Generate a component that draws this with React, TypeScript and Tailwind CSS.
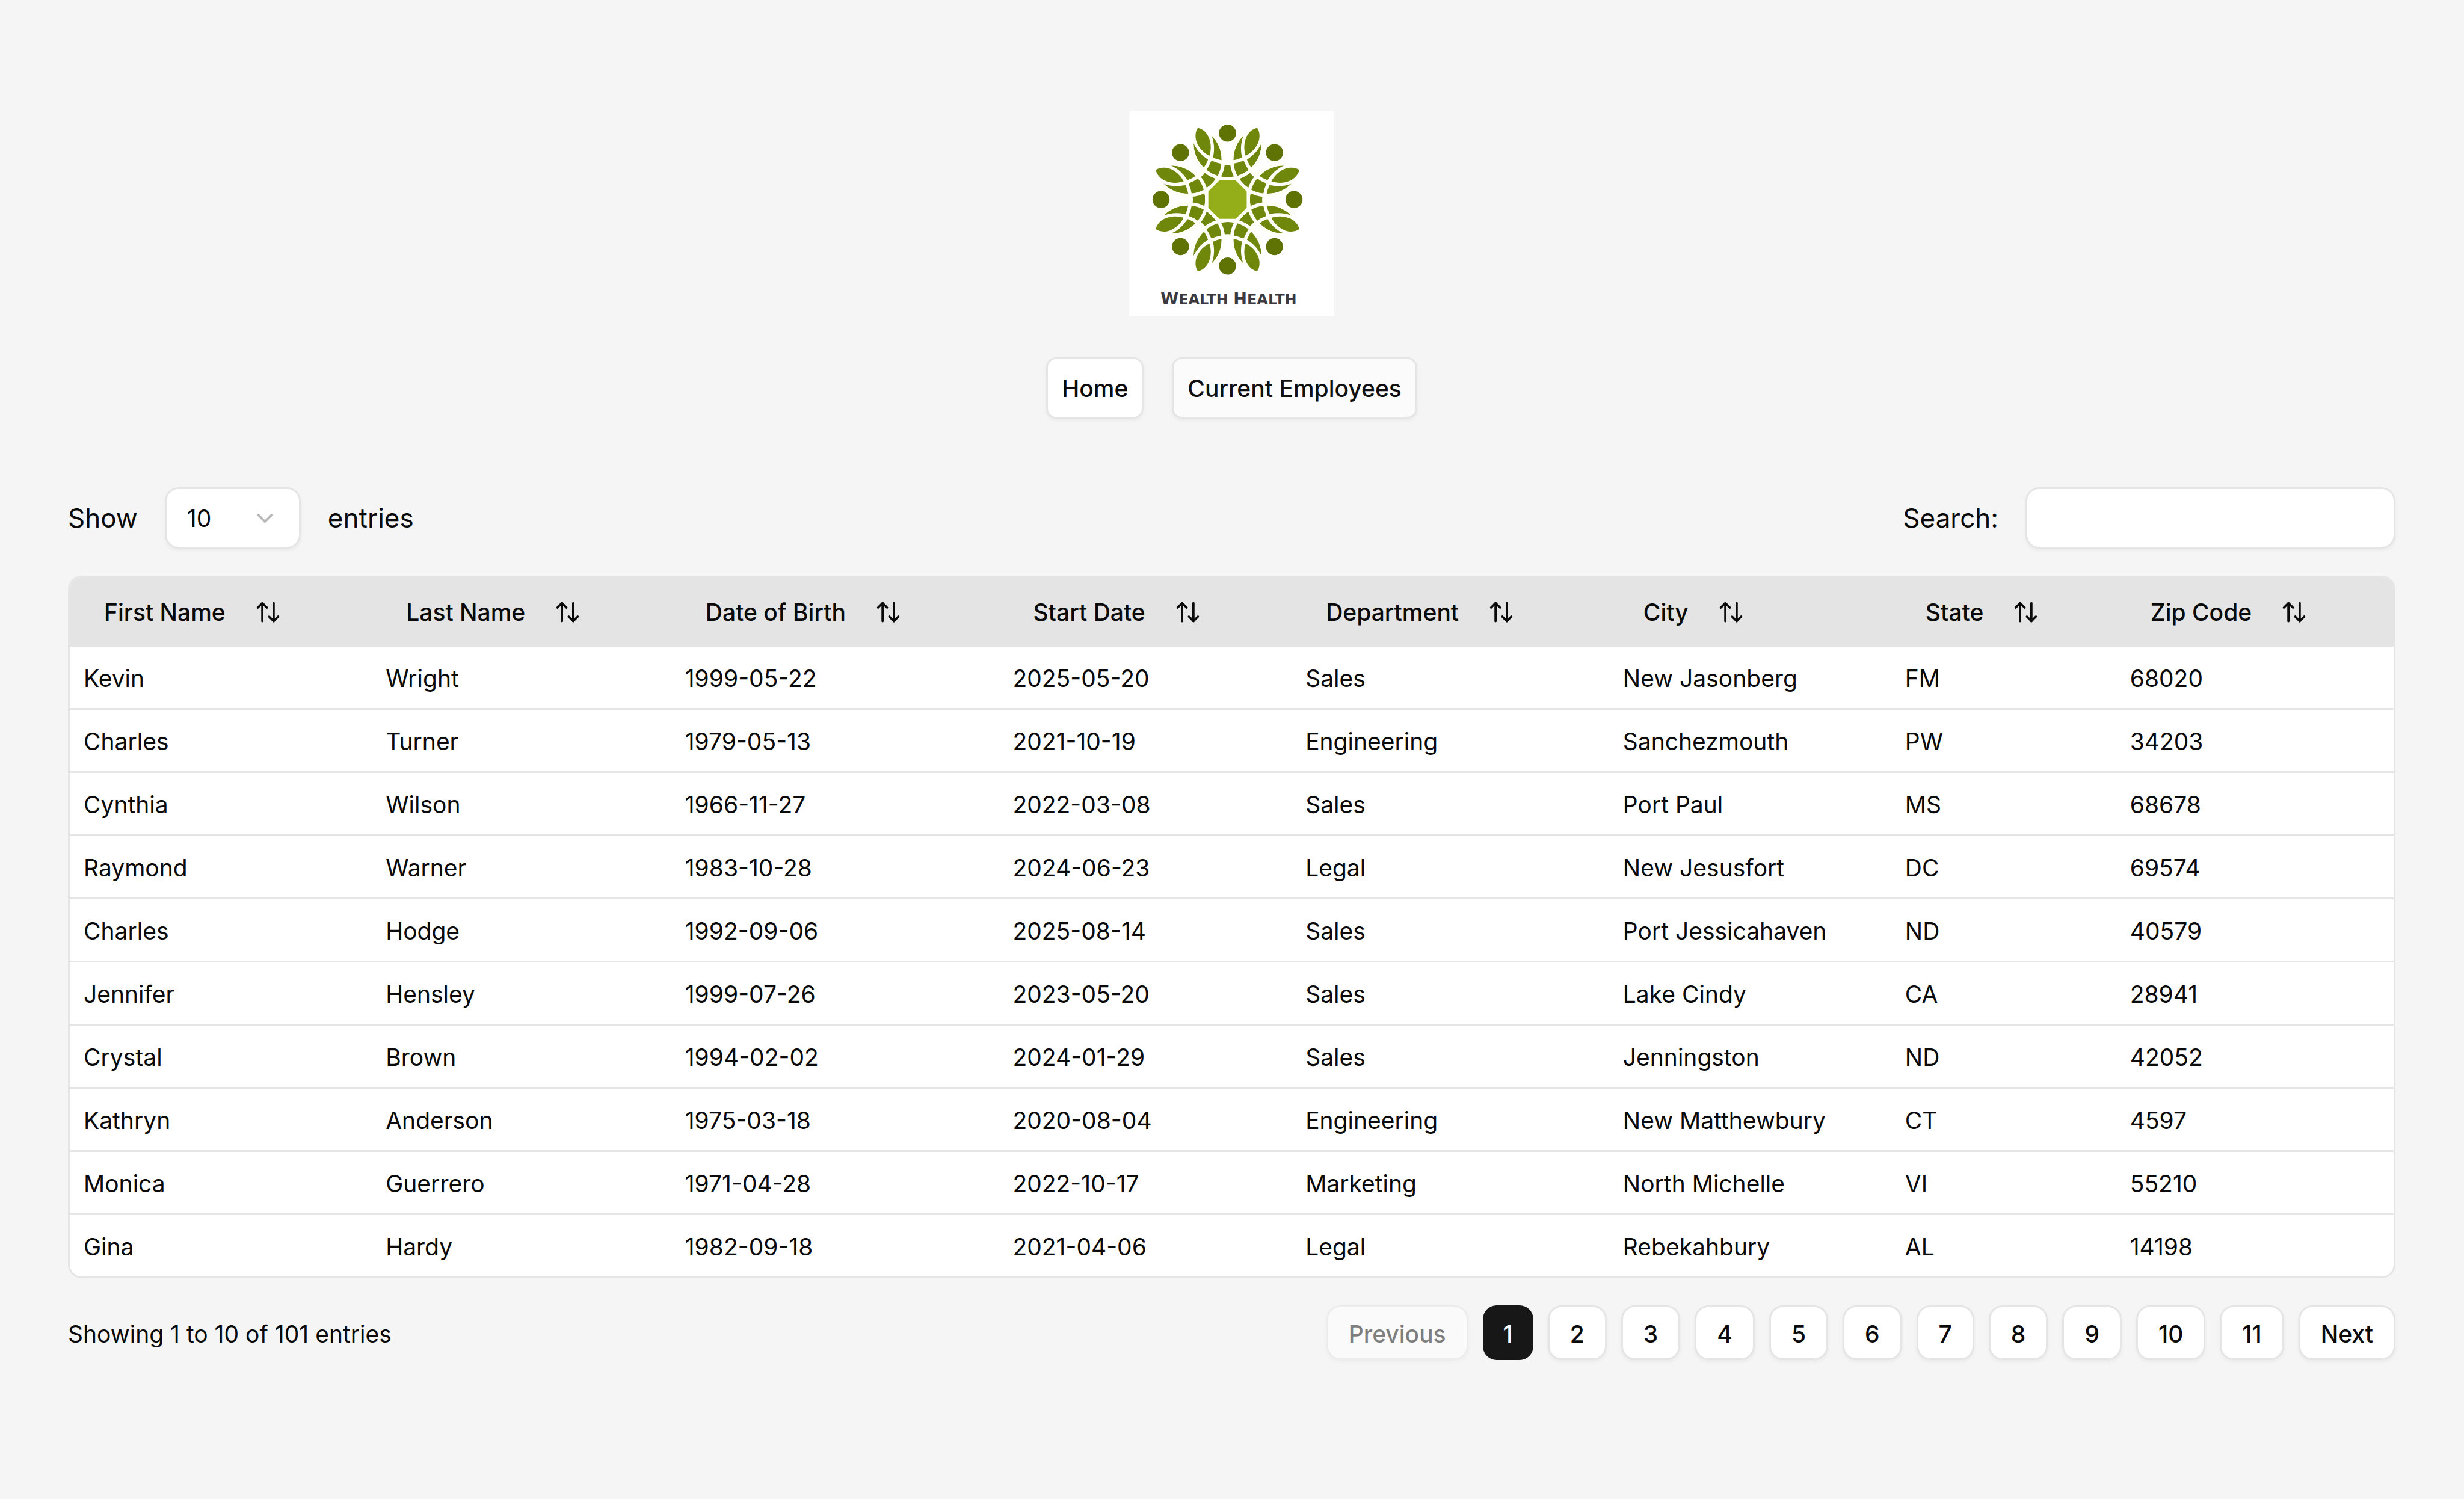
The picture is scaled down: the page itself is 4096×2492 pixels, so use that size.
import { useState } from "react";
import { ArrowUpDown, ChevronDown } from "lucide-react";

type Employee = [string, string, string, string, string, string, string, string];

const columns = [
  { label: "First Name", width: "w-[13%]" },
  { label: "Last Name", width: "w-[12.88%]" },
  { label: "Date of Birth", width: "w-[14.1%]" },
  { label: "Start Date", width: "w-[12.6%]" },
  { label: "Department", width: "w-[13.66%]" },
  { label: "City", width: "w-[12.14%]" },
  { label: "State", width: "w-[9.68%]" },
  { label: "Zip Code", width: "w-[11.94%]" },
];

const employees: Employee[] = [
  ["Kevin", "Wright", "1999-05-22", "2025-05-20", "Sales", "New Jasonberg", "FM", "68020"],
  ["Charles", "Turner", "1979-05-13", "2021-10-19", "Engineering", "Sanchezmouth", "PW", "34203"],
  ["Cynthia", "Wilson", "1966-11-27", "2022-03-08", "Sales", "Port Paul", "MS", "68678"],
  ["Raymond", "Warner", "1983-10-28", "2024-06-23", "Legal", "New Jesusfort", "DC", "69574"],
  ["Charles", "Hodge", "1992-09-06", "2025-08-14", "Sales", "Port Jessicahaven", "ND", "40579"],
  ["Jennifer", "Hensley", "1999-07-26", "2023-05-20", "Sales", "Lake Cindy", "CA", "28941"],
  ["Crystal", "Brown", "1994-02-02", "2024-01-29", "Sales", "Jenningston", "ND", "42052"],
  ["Kathryn", "Anderson", "1975-03-18", "2020-08-04", "Engineering", "New Matthewbury", "CT", "4597"],
  ["Monica", "Guerrero", "1971-04-28", "2022-10-17", "Marketing", "North Michelle", "VI", "55210"],
  ["Gina", "Hardy", "1982-09-18", "2021-04-06", "Legal", "Rebekahbury", "AL", "14198"],
];

const pages = [1, 2, 3, 4, 5, 6, 7, 8, 9, 10, 11];
const turns = [0, 45, 90, 135, 180, 225, 270, 315];

const shadow = "shadow-[0_3px_6px_rgba(0,0,0,0.05)]";

function Logo() {
  return (
    <svg viewBox="0 0 1080 1080" className="size-[341px] bg-white" role="img" aria-label="Wealth Health">
      <g transform="translate(518 465)">
        {turns.map((a) => (
          <path
            key={a}
            transform={`rotate(${a})`}
            d="M-179-297A179 179 0 0 0 179-297A197 197 0 0 1-179-297Z"
            fill="#6f870b"
          />
        ))}
        {turns.map((a) => (
          <g key={a} transform={`rotate(${a})`} fill="none" stroke="#fefff6" strokeWidth="18">
            <path d="M-188-297A188 188 0 0 0 188-297" />
            <path d="M-170-303A188 188 0 0 0 170-303" />
          </g>
        ))}
        {turns.map((a) => (
          <g key={a} transform={`rotate(${a})`}>
            <circle cy="-350" r="45" fill="#5e7304" />
            <path
              transform="rotate(22.5)"
              d="M0-250C-22-275-36-310-34-345C-32-375-16-400 0-408C16-400 32-375 34-345C36-310 22-275 0-250Z"
              fill="#6f870b"
            />
          </g>
        ))}
        <path d="M-43-101L43-101L101-43L101 43L43 101L-43 101L-101 43L-101-43Z" fill="#93ae18" />
      </g>
      <text
        x="524"
        y="1016"
        textAnchor="middle"
        fontFamily="DejaVu Sans, sans-serif"
        fontWeight="700"
        fontSize="76"
        fill="#3a3a40"
      >
        <tspan fontSize="86">W</tspan>EALTH <tspan fontSize="86">H</tspan>EALTH
      </text>
    </svg>
  );
}

export default function App() {
  const [pageSize, setPageSize] = useState("10");
  const [query, setQuery] = useState("");
  const [page, setPage] = useState(1);

  return (
    <div className="flex min-h-screen flex-col bg-[#f5f5f5] py-[185px] pr-[114px] pl-[113px] font-['Inter',sans-serif] text-[39px] leading-[57px] text-neutral-950">
      <header className="flex flex-col items-center gap-[68px]">
        <Logo />
        <nav className="flex gap-[47px]">
          <a
            href="#home"
            className={`flex h-[102px] items-center rounded-[17px] border-3 border-neutral-200 bg-white px-[23px] font-medium ${shadow}`}
          >
            Home
          </a>
          <a
            href="#employees"
            className={`flex h-[102px] items-center rounded-[17px] border-3 border-neutral-200 bg-[#fbfbfb] px-[23px] font-medium text-[#101010] ${shadow}`}
          >
            Current Employees
          </a>
        </nav>
      </header>

      <main className="mt-[114px] flex flex-col gap-[45px]">
        <div className="flex items-center justify-between text-[44px]">
          <div className="flex items-center gap-[45px]">
            <label htmlFor="page-size">Show</label>
            <div className="relative">
              <select
                id="page-size"
                value={pageSize}
                onChange={(e) => setPageSize(e.target.value)}
                className={`block h-[102px] w-[226px] appearance-none rounded-[23px] border-3 border-neutral-200 bg-white px-[34px] text-[39px] ${shadow}`}
              >
                <option>10</option>
                <option>25</option>
                <option>50</option>
                <option>100</option>
              </select>
              <ChevronDown className="pointer-events-none absolute inset-y-0 right-[37px] my-auto size-[45px] text-[#b9b9b9]" />
            </div>
            <span>entries</span>
          </div>
          <div className="flex items-center gap-[45px]">
            <label htmlFor="search">Search:</label>
            <input
              id="search"
              type="text"
              value={query}
              onChange={(e) => setQuery(e.target.value)}
              className={`h-[102px] w-[615px] rounded-[23px] border-3 border-neutral-200 bg-white px-[34px] text-[39px] ${shadow}`}
            />
          </div>
        </div>

        <div className="overflow-hidden rounded-[23px] border-3 border-neutral-200 bg-white">
          <table className="w-full table-fixed border-separate border-spacing-0">
            <thead className="bg-[#e4e4e4]">
              <tr>
                {columns.map((c) => (
                  <th key={c.label} className={`h-[115px] px-[23px] py-0 text-left font-medium ${c.width}`}>
                    <button type="button" className="flex items-center gap-[48px] px-[34px] whitespace-nowrap">
                      {c.label}
                      <ArrowUpDown className="size-[45px] shrink-0" />
                    </button>
                  </th>
                ))}
              </tr>
            </thead>
            <tbody className="[&>tr:last-child>td]:h-[102px] [&>tr:last-child>td]:border-b-0">
              {employees.map((row, r) => (
                <tr key={r}>
                  {row.map((cell, i) => (
                    <td key={i} className="h-[105px] border-b-3 border-neutral-200 px-[23px] pt-[3px] pb-0 whitespace-nowrap">
                      {cell}
                    </td>
                  ))}
                </tr>
              ))}
            </tbody>
          </table>
        </div>

        <div className="flex items-center justify-between">
          <p className="pt-[3px]">Showing 1 to 10 of 101 entries</p>
          <div className="flex gap-[24px] font-medium">
            <button
              type="button"
              disabled
              className={`h-[91px] rounded-[23px] border-3 border-neutral-200 bg-white px-[34px] pt-[3px] opacity-50 ${shadow}`}
            >
              Previous
            </button>
            {pages.map((p) =>
              p === page ? (
                <button
                  key={p}
                  type="button"
                  aria-current="page"
                  className="h-[91px] rounded-[23px] bg-neutral-900 px-[34px] pt-[3px] text-neutral-50"
                >
                  {p}
                </button>
              ) : (
                <button
                  key={p}
                  type="button"
                  onClick={() => setPage(p)}
                  className={`h-[91px] rounded-[23px] border-3 border-neutral-200 bg-white px-[34px] pt-[3px] ${shadow}`}
                >
                  {p}
                </button>
              ),
            )}
            <button
              type="button"
              onClick={() => setPage(Math.min(page + 1, 11))}
              className={`h-[91px] rounded-[23px] border-3 border-neutral-200 bg-white px-[34px] pt-[3px] ${shadow}`}
            >
              Next
            </button>
          </div>
        </div>
      </main>
    </div>
  );
}
